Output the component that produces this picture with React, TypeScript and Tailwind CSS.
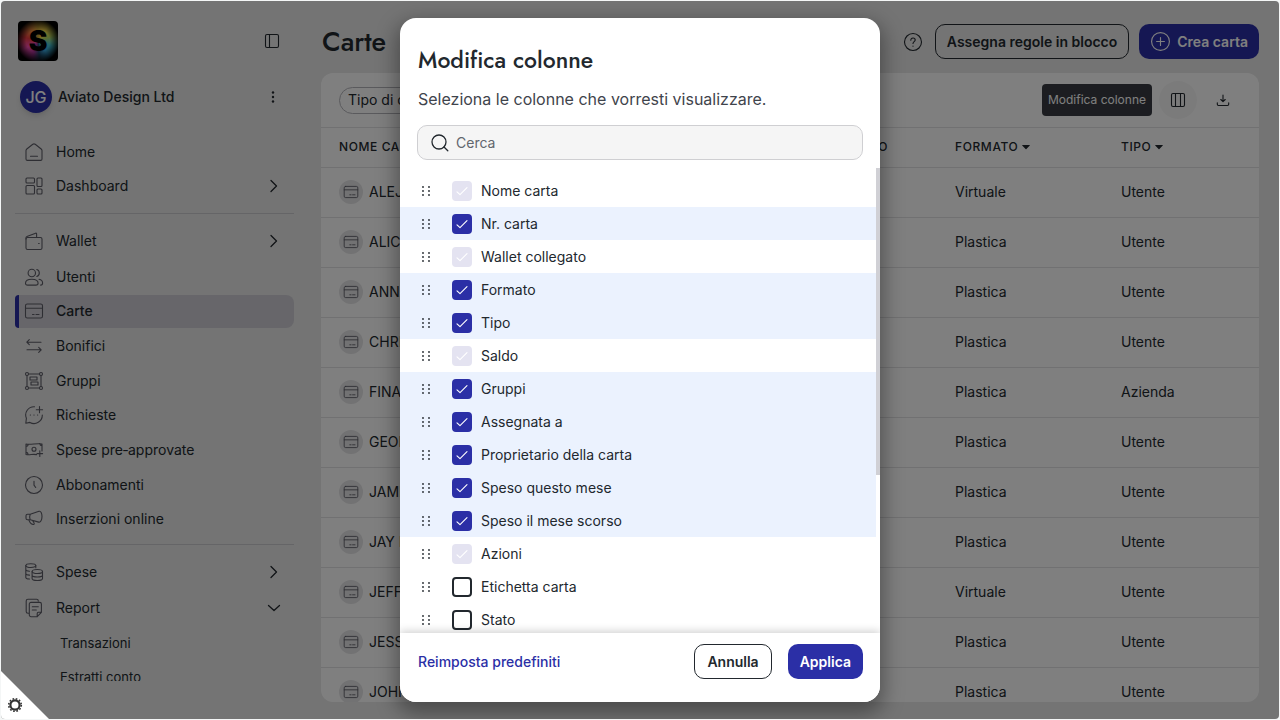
import React from "react";

type IconProps = { children: React.ReactNode; className?: string; box?: string };

function Icon({ children, className = "size-5", box = "0 0 20 20" }: IconProps) {
  return (
    <svg
      viewBox={box}
      className={"shrink-0 " + className}
      fill="none"
      stroke="currentColor"
      strokeWidth="1.1"
      strokeLinecap="round"
      strokeLinejoin="round"
      aria-hidden="true"
    >
      {children}
    </svg>
  );
}

const cardShape = (
  <>
    <rect x="1.5" y="3" width="17" height="14" rx="1.8" />
    <path d="M1.5 7.3h17M8.5 13.5h1.6M12 13.5h3" />
  </>
);

const icons = {
  home: <path d="M2 8.6a2 2 0 0 1 .8-1.6l6-4.7a2 2 0 0 1 2.4 0l6 4.7a2 2 0 0 1 .8 1.6V17a1.4 1.4 0 0 1-1.4 1.4H3.4A1.4 1.4 0 0 1 2 17ZM6.5 14.3h7" />,
  dashboard: (
    <>
      <rect x="2" y="2" width="8.5" height="5" rx="1" />
      <rect x="13" y="2" width="5" height="8.5" rx="1" />
      <rect x="2" y="9.5" width="8.5" height="8.5" rx="1" />
      <rect x="13" y="13" width="5" height="5" rx="1" />
    </>
  ),
  wallet: (
    <>
      <rect x="2" y="6.5" width="16" height="12" rx="1.6" />
      <path d="M2 8V6.7c0-.6.3-1 .9-1.2l8.7-3.3c.6-.2 1 .1 1 .7v3.6M14.6 12.5h.6" />
    </>
  ),
  users: (
    <>
      <circle cx="7.8" cy="6" r="3.7" />
      <path d="M1.5 16.2c0-2.7 2-4 6.3-4s6.3 1.3 6.3 4c0 1.3-.7 1.9-2.2 1.9H3.7c-1.5 0-2.2-.6-2.2-1.9ZM12.8 2.5a3.7 3.7 0 0 1 0 7M15 12.3c2.4.4 3.6 1.6 3.6 3.7 0 1.3-.6 2.1-2 2.1" />
    </>
  ),
  card: cardShape,
  transfer: <path d="M17 6.2H3M5.3 3.7 2.8 6.2l2.5 2.5M3 13.8h14M14.7 11.3l2.5 2.5-2.5 2.5" />,
  group: (
    <>
      <circle cx="3" cy="3" r="1.5" />
      <circle cx="17" cy="3" r="1.5" />
      <circle cx="3" cy="17" r="1.5" />
      <circle cx="17" cy="17" r="1.5" />
      <path d="M4.5 3h11M4.5 17h11M3 4.5v11M17 4.5v11M6 6h7v3H6ZM7 11h7v3H7Z" />
    </>
  ),
  request: (
    <path d="M10.5 1.7A8.3 8.3 0 0 0 2.4 13.3L1.8 18.2l4.1-.8A8.3 8.3 0 0 0 18.3 10M15.5 1.5v6.3M12.3 4.7h6.3M6.3 10h.2M9.9 10h.2M13.5 10h.2" />
  ),
  money: (
    <>
      <path d="M12.5 14.6c-4-1-7 .9-10.5-.2V4c4.5 1.3 11-1.3 16 0v7M2 6.3c1.3 0 2.1-.8 2.1-1.9M15.8 3.6c0 1.2 1 2 2.2 2M2 12.2c1.3 0 2 .9 2 2.5M15.8 10.8v5.6M13 13.6h5.6" />
      <circle cx="10" cy="9.2" r="2" />
    </>
  ),
  clock: (
    <>
      <circle cx="10" cy="10" r="8.5" />
      <path d="M10 6.3v3.9l1.7 2.3" />
    </>
  ),
  megaphone: (
    <path d="M2 6.7c0-1 .6-1.5 1.5-1.5h2.7L15 2.3c1.8-.6 3 2 3 5.2s-1.5 6.3-3.3 5.6L6.2 10.8H3.5C2.6 10.8 2 10 2 9.2ZM6.2 5.2c-.7 1.7-.7 3.9 0 5.6M4.8 10.9c1.1 1.9 1.2 4.6 4.4 4.6.9 0 1.3-.9.8-1.7L8.7 11.6" />
  ),
  coins: (
    <>
      <ellipse cx="6.8" cy="3.6" rx="5" ry="1.9" />
      <path d="M1.8 3.6v11.8c0 .8 1.7 1.5 3.7 1.6M11.8 3.6v2.2M1.8 7.5c0 .9 1.7 1.6 3.7 1.7M1.8 11.4c0 .9 1.7 1.6 3.7 1.7" />
      <ellipse cx="13.3" cy="9.5" rx="5.2" ry="2" />
      <path d="M8.1 9.5v7c0 1.2 2.3 2 5.2 2s5.2-.8 5.2-2v-7M8.1 13c0 1.2 2.3 2 5.2 2s5.2-.8 5.2-2" />
    </>
  ),
  report: (
    <path d="M5 15.2H3.9A1.7 1.7 0 0 1 2.2 13.5V3a1.7 1.7 0 0 1 1.7-1.7h8.7A1.7 1.7 0 0 1 14.3 3M7 4.4h8.7a1.7 1.7 0 0 1 1.7 1.7v8.2l-4.2 4.4H7A1.7 1.7 0 0 1 5.3 17V6.1A1.7 1.7 0 0 1 7 4.4ZM17.4 14.3h-3c-.7 0-1.2.5-1.2 1.2v3.2M8.3 8.7h6M8.3 12h4" />
  ),
};

type NavProps = { icon: keyof typeof icons; label: string; active?: boolean; open?: "right" | "down" };

function NavItem({ icon, label, active, open }: NavProps) {
  return (
    <a
      href="#"
      className={
        active
          ? "flex h-[33px] items-center overflow-hidden rounded-l rounded-r-lg bg-[#cecdd4] pr-3 font-medium"
          : "flex h-[33px] items-center pr-3"
      }
    >
      <span className={active ? "w-1 self-stretch bg-[#2b2fa6]" : "w-1"} />
      <Icon className="ml-[5px] size-5 text-[#5c5c66]">{icons[icon]}</Icon>
      <span className="ml-3 flex-1">{label}</span>
      {open && (
        <Icon className="size-4" box="0 0 16 16">
          {open === "right" ? <path d="m5 2.5 5.5 5.5L5 13.5" strokeWidth="1.3" /> : <path d="m2.5 5.5 5.5 5 5.5-5" strokeWidth="1.3" />}
        </Icon>
      )}
    </a>
  );
}

function Sidebar() {
  return (
    <aside className="flex w-[293px] shrink-0 flex-col pt-5 pl-[14px]">
      <div className="flex items-center justify-between pr-[14px] pl-[3px]">
        <div className="flex size-10 items-center justify-center rounded bg-black bg-[radial-gradient(circle_at_50%_50%,transparent_42%,#000_76%),conic-gradient(from_0deg,#c8a038,#f8d848_35deg,#b8d860_70deg,#45c8d8_110deg,#35a0d8_145deg,#204868_175deg,#a03090_200deg,#f84cb0_240deg,#e83c40_285deg,#f08840_325deg,#c8a038)]">
          <span className="text-[28px] leading-none font-black text-black">S</span>
        </div>
        <button aria-label="Comprimi menu">
          <Icon className="size-4" box="0 0 16 16">
            <rect x="1.5" y="1.5" width="13" height="13" rx="1.5" />
            <path d="M5.5 1.5v13" />
          </Icon>
        </button>
      </div>
      <div className="mt-5 flex items-center pr-[13px] pl-[5px]">
        <span className="flex size-8 items-center justify-center rounded-full bg-[#2b2fa6] text-base font-medium text-white shadow-md">JG</span>
        <span className="ml-1.5 flex-1 font-medium">Aviato Design Ltd</span>
        <button aria-label="Altre opzioni">
          <svg viewBox="0 0 16 16" className="size-4" fill="currentColor" aria-hidden="true">
            <circle cx="8" cy="3.5" r="1.2" />
            <circle cx="8" cy="8" r="1.2" />
            <circle cx="8" cy="12.5" r="1.2" />
          </svg>
        </button>
      </div>
      <nav className="h-[568px] overflow-hidden pt-[22px]">
        <NavItem icon="home" label="Home" />
        <div className="mt-px">
          <NavItem icon="dashboard" label="Dashboard" open="right" />
        </div>
        <hr className="mt-[11px] mb-[10px] border-[#cacace]" />
        <NavItem icon="wallet" label="Wallet" open="right" />
        <div className="mt-[3px] flex h-[276px] flex-col justify-between">
          <NavItem icon="users" label="Utenti" />
          <NavItem icon="card" label="Carte" active />
          <NavItem icon="transfer" label="Bonifici" />
          <NavItem icon="group" label="Gruppi" />
          <NavItem icon="request" label="Richieste" />
          <NavItem icon="money" label="Spese pre‑approvate" />
          <NavItem icon="clock" label="Abbonamenti" />
          <NavItem icon="megaphone" label="Inserzioni online" />
        </div>
        <hr className="mt-2 mb-[10px] border-[#cacace]" />
        <NavItem icon="coins" label="Spese" open="right" />
        <div className="mt-[3px]">
          <NavItem icon="report" label="Report" open="down" />
        </div>
        <div className="mt-[2px] flex flex-col pl-[45px] text-[13px]">
          <a href="#" className="flex h-[34px] items-center">Transazioni</a>
          <a href="#" className="flex h-[34px] items-center">Estratti conto</a>
        </div>
      </nav>
    </aside>
  );
}

const rows: [string, string, string][] = [
  ["ALEJANDRO", "Virtuale", "Utente"],
  ["ALICE", "Plastica", "Utente"],
  ["ANNA", "Plastica", "Utente"],
  ["CHRIS", "Plastica", "Utente"],
  ["FINANCE", "Plastica", "Azienda"],
  ["GEORGE", "Plastica", "Utente"],
  ["JAMES", "Plastica", "Utente"],
  ["JAY R", "Plastica", "Utente"],
  ["JEFF", "Virtuale", "Utente"],
  ["JESSICA", "Plastica", "Utente"],
  ["JOHN", "Plastica", "Utente"],
];

function Caret() {
  return (
    <svg viewBox="0 0 8 5" className="ml-1 inline h-[5px] w-2 align-middle" fill="currentColor" aria-hidden="true">
      <path d="M.5 0h7c.4 0 .5.4.3.6L4.4 4c-.3.3-.5.3-.8 0L.2.6C0 .4.1 0 .5 0Z" />
    </svg>
  );
}

function CardsPage() {
  return (
    <main className="flex min-w-0 flex-1 flex-col pt-[23px] pr-5 pb-[17px] pl-[27px]">
      <header className="flex items-center">
        <h1 className="flex-1 pl-px font-[Jost,Lato,sans-serif] text-[27px] leading-[35px] font-medium">Carte</h1>
        <button aria-label="Aiuto" className="mr-3">
          <Icon className="size-5">
            <circle cx="10" cy="10" r="8.5" />
            <path d="M7.8 8.2c0-1.4.9-2.2 2.2-2.2s2.2.8 2.2 2c0 1.5-2.2 1.8-2.2 3.5M10 14v.2" />
          </Icon>
        </button>
        <button className="mr-[10px] h-[35px] rounded-[10px] border border-[#22282e] px-[11px] font-semibold">Assegna regole in blocco</button>
        <button className="flex h-[35px] items-center gap-1.5 rounded-[10px] bg-[#2b2fa6] px-[11px] font-semibold text-white">
          <Icon className="size-[21px]">
            <circle cx="10" cy="10" r="8.5" />
            <path d="M10 6.3v7.4M6.3 10h7.4" />
          </Icon>
          Crea carta
        </button>
      </header>
      <section className="mt-[14px] min-h-0 flex-1 overflow-hidden rounded-xl bg-white">
        <div className="flex h-[55px] items-center border-b border-[#e2e2e5] pr-[17px] pl-[18px]">
          <button className="h-[27px] rounded-full border border-[#b5b5bb] px-2">Tipo di carta</button>
          <span className="ml-auto flex h-8 items-center rounded bg-[#383b42] px-1.5 text-xs text-white">Modifica colonne</span>
          <button aria-label="Modifica colonne" className="ml-[7px] flex size-[38px] items-center justify-center rounded-full bg-[#f7f7f7]">
            <Icon className="size-4" box="0 0 16 16">
              <rect x="1.5" y="1.5" width="13" height="13" rx="1.5" />
              <path d="M5.5 1.5v13M10.5 1.5v13" />
            </Icon>
          </button>
          <button aria-label="Scarica" className="ml-[7px] flex size-[38px] items-center justify-center">
            <Icon className="size-4" box="0 0 16 16">
              <path d="M8 3v6.500M5.800 7.500 8 9.700l2.200-2.200M2.300 10.700v1.600c0 .8.400 1.200 1.200 1.200h9c.8 0 1.200-.4 1.200-1.200v-1.600" />
            </Icon>
          </button>
        </div>
        <table className="w-full table-fixed text-left">
          <colgroup>
            <col className="w-[45%]" />
            <col />
            <col className="w-[166px]" />
            <col className="w-[138px]" />
          </colgroup>
          <thead>
            <tr className="h-[39px] border-b border-[#e2e2e5] text-xs tracking-wider uppercase">
              <th className="pl-[18px] font-medium">Nome carta</th>
              <th className="pr-[67px] text-right font-medium whitespace-nowrap">Wallet collegato</th>
              <th className="font-medium">Formato<Caret /></th>
              <th className="font-medium">Tipo<Caret /></th>
            </tr>
          </thead>
          <tbody>
            {rows.map(([name, format, kind]) => (
              <tr key={name} className="h-[50px] border-b border-[#e2e2e5]">
                <td className="pl-[18px]">
                  <div className="flex items-center gap-1.5">
                    <span className="flex size-6 items-center justify-center rounded-full bg-[#e4e4e6]">
                      <Icon className="size-4 text-[#5c5c66]">{cardShape}</Icon>
                    </span>
                    {name}
                  </div>
                </td>
                <td />
                <td>{format}</td>
                <td>{kind}</td>
              </tr>
            ))}
          </tbody>
        </table>
      </section>
    </main>
  );
}

type Column = { label: string; state: "locked" | "on" | "off" };

const columns: Column[] = [
  { label: "Nome carta", state: "locked" },
  { label: "Nr. carta", state: "on" },
  { label: "Wallet collegato", state: "locked" },
  { label: "Formato", state: "on" },
  { label: "Tipo", state: "on" },
  { label: "Saldo", state: "locked" },
  { label: "Gruppi", state: "on" },
  { label: "Assegnata a", state: "on" },
  { label: "Proprietario della carta", state: "on" },
  { label: "Speso questo mese", state: "on" },
  { label: "Speso il mese scorso", state: "on" },
  { label: "Azioni", state: "locked" },
  { label: "Etichetta carta", state: "off" },
  { label: "Stato", state: "off" },
];

function ColumnRow({ label, state }: Column) {
  return (
    <li className="has-[:enabled:checked]:bg-[#ebf2fe]">
      <label className="flex h-[33px] items-center pl-5">
        <svg viewBox="0 0 12 12" className="size-3 shrink-0" fill="#22282e" aria-hidden="true">
          {[2, 6, 10].map((y) => (
            <React.Fragment key={y}>
              <circle cx="3" cy={y} r="0.9" />
              <circle cx="9" cy={y} r="0.9" />
            </React.Fragment>
          ))}
        </svg>
        <span className="ml-5 grid size-5 shrink-0">
          <input
            type="checkbox"
            defaultChecked={state !== "off"}
            disabled={state === "locked"}
            className="peer col-start-1 row-start-1 size-5 appearance-none rounded border-2 border-[#22282e] bg-white checked:border-[#2b2fa6] checked:bg-[#2b2fa6] disabled:border-[#e4e3f1] disabled:bg-[#e4e3f1]"
          />
          <svg viewBox="0 0 20 20" className="pointer-events-none invisible col-start-1 row-start-1 size-5 peer-checked:visible" fill="none" stroke="#fff" strokeWidth="1.1" strokeLinecap="round" strokeLinejoin="round" aria-hidden="true">
            <path d="m5 10.8 3 2.900 7-7" />
          </svg>
        </span>
        <span className="ml-[9px]">{label}</span>
      </label>
    </li>
  );
}

function ColumnsDialog() {
  return (
    <div role="dialog" aria-modal="true" aria-labelledby="dialog-title" className="flex h-full w-full max-w-[480px] flex-col overflow-hidden rounded-2xl bg-white shadow-[0_8px_20px_4px_rgba(0,0,0,0.35)]">
      <div className="px-[17px] pt-6">
        <h2 id="dialog-title" className="pl-px font-[Jost,Lato,sans-serif] text-[23px] leading-9 font-medium">Modifica colonne</h2>
        <p className="mt-[9px] pl-px text-base text-[#3f444c]">Seleziona le colonne che vorresti visualizzare.</p>
        <label className="mt-[14px] flex h-[35px] items-center gap-1.5 rounded-[10px] border border-[#cfcfd2] bg-[#f5f5f5] px-3">
          <Icon className="size-5">
            <circle cx="9" cy="9" r="7" strokeWidth="1.3" />
            <path d="m14 14 3.8 3.8" strokeWidth="1.3" />
          </Icon>
          <input type="text" aria-label="Cerca" placeholder="Cerca" className="min-w-0 flex-1 bg-transparent outline-none placeholder:text-[#62666d]" />
        </label>
      </div>
      <div className="mt-2 flex min-h-0 flex-1">
        <ul className="flex-1 overflow-y-auto pt-1.5 [scrollbar-width:none]">
          {columns.map((c) => (
            <ColumnRow key={c.label} {...c} />
          ))}
        </ul>
        <div className="h-[66%] w-1 bg-[#d0d0d5]" />
      </div>
      <footer className="relative flex items-center gap-4 bg-white px-[17px] pt-[11px] pb-[23px] shadow-[0_-2px_8px_rgba(0,0,0,0.18)]">
        <button className="mr-auto pl-px font-medium text-[#2b2fa6]">Reimposta predefiniti</button>
        <button className="h-[35px] rounded-[10px] border border-[#22282e] bg-white px-3 font-semibold">Annulla</button>
        <button className="h-[35px] rounded-[10px] bg-[#2b2fa6] px-3 font-semibold text-white">Applica</button>
      </footer>
    </div>
  );
}

export default function App() {
  return (
    <div className="h-screen bg-[#f4f6f6] p-px font-[Inter,sans-serif] text-sm text-[#22282e]">
      <div className="relative h-full overflow-hidden rounded">
        <div className="flex h-full bg-[#e8e8e8]">
          <Sidebar />
          <CardsPage />
        </div>
        <div className="absolute inset-0 flex justify-center bg-black/50 py-[17px]">
          <ColumnsDialog />
        </div>
        <button aria-label="Impostazioni" className="absolute bottom-0 left-0 flex size-12 items-end bg-white pb-[6px] pl-[6px] [clip-path:polygon(0_0,100%_100%,0_100%)]">
          <svg viewBox="0 0 16 16" className="size-4" fill="none" stroke="#333" aria-hidden="true">
            <circle cx="8" cy="8" r="4.6" strokeWidth="2.2" />
            <circle cx="8" cy="8" r="6.3" strokeWidth="1.6" strokeDasharray="1.649 1.649" />
          </svg>
        </button>
      </div>
    </div>
  );
}
